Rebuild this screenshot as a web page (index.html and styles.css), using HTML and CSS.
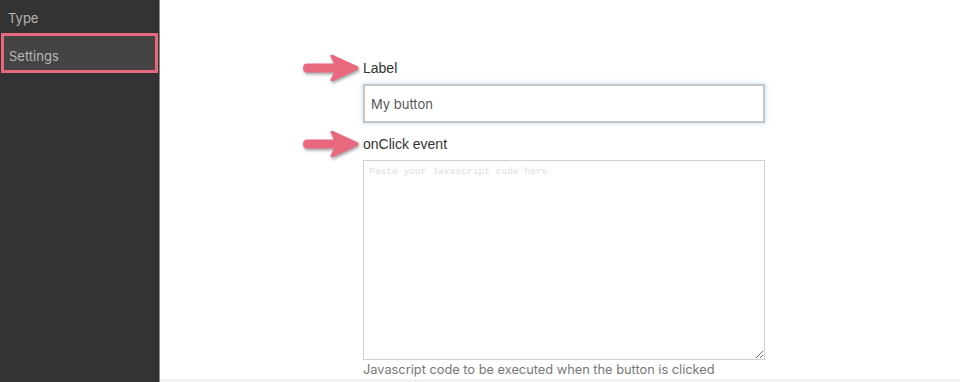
FILE: index.html
```html
<!DOCTYPE html>
<html lang="en">
    <head>
        <meta charset="UTF-8" />
        <title>Button settings</title>
        <link rel="stylesheet" href="styles.css">
    </head>
    <body>
        <div class="app">
            <nav class="sidebar">
                <div class="navItem">Type</div>
                <div class="navItem active">Settings</div>
            </nav>
            <main class="main">
                <form class="settingsForm">
                    <svg class="arrow" viewBox="0 0 58 28" width="58" height="28">
                        <path d="M5 9.5 H32 L28.5 2.5 Q28 0.3 30.5 0.8 L55.5 12.3 Q57.8 14 55.5 15.7 L30.5 27.2 Q28 27.7 28.5 25.5 L32 18.5 H5 Q1 18.5 1 14 Q1 9.5 5 9.5 Z" />
                    </svg>
                    <label for="labelInput" class="fieldLabel">Label</label>
                    <input id="labelInput" class="textInput" type="text" value="My button" />

                    <svg class="arrow" viewBox="0 0 58 28" width="58" height="28">
                        <path d="M5 9.5 H32 L28.5 2.5 Q28 0.3 30.5 0.8 L55.5 12.3 Q57.8 14 55.5 15.7 L30.5 27.2 Q28 27.7 28.5 25.5 L32 18.5 H5 Q1 18.5 1 14 Q1 9.5 5 9.5 Z" />
                    </svg>
                    <label for="clickInput" class="fieldLabel">onClick event</label>
                    <textarea id="clickInput" class="codeInput" placeholder="Paste your Javascript code here"></textarea>
                    <p class="hint">Javascript code to be executed when the button is clicked</p>
                </form>
            </main>
        </div>
    </body>
</html>
```

FILE: styles.css
```css
* {
    margin: 0;
    padding: 0;
    box-sizing: border-box;
}
html,
body {
    width: 100%;
    height: 100%;
    background-color: white;
    font-family: Inter, "Liberation Sans", sans-serif;
}
.app {
    display: flex;
    height: 100%;
}
.sidebar {
    width: 160px;
    flex-shrink: 0;
    background-color: #333333;
    border-right: 1px solid #8a8a8a;
    padding-right: 1px;
}
.navItem {
    height: 33px;
    padding: 3px 8px 0;
    display: flex;
    align-items: center;
    font-size: 13px;
    color: #b4b4b4;
}
.navItem.active {
    height: 40px;
    margin-left: 1px;
    padding: 6px 5px 0;
    border: 3px solid #e8697e;
    background-color: #444444;
    color: #b8b8b8;
}
.main {
    flex: 1;
    padding: 54px 0 0 142px;
    border-bottom: 3px solid #f3f3f3;
}
.settingsForm {
    display: grid;
    grid-template-columns: 58px 402px;
    column-gap: 3px;
    align-items: center;
}
.arrow {
    grid-column: 1;
    fill: #e8697e;
    filter: drop-shadow(1px 2px 1.5px rgba(0, 0, 0, 0.35));
}
.fieldLabel {
    grid-column: 2;
    font-family: "Liberation Sans", Arial, sans-serif;
    font-size: 14px;
    color: #333333;
    line-height: 24px;
}
.textInput {
    grid-column: 2;
    margin-top: 2px;
    height: 39px;
    padding: 0 6px;
    border: 2px solid #c6c6c6;
    box-shadow: 0 0 4px 1px rgba(120, 175, 235, 0.35);
    font-family: Inter, sans-serif;
    font-size: 13px;
    color: #555555;
    outline: none;
}
.textInput + .arrow {
    margin-top: 7px;
}
.textInput + .arrow + .fieldLabel {
    margin-top: 7px;
}
.codeInput {
    grid-column: 2;
    margin-top: 2px;
    height: 200px;
    padding: 5px 5px;
    border: 1px solid #d0d0d0;
    resize: vertical;
    font-family: "Liberation Mono", monospace;
    font-size: 9.6px;
    outline: none;
}
.codeInput::placeholder {
    color: #dcdcdc;
}
.hint {
    grid-column: 2;
    margin-top: 1px;
    font-size: 12.8px;
    color: #777777;
    line-height: 18px;
}
```
